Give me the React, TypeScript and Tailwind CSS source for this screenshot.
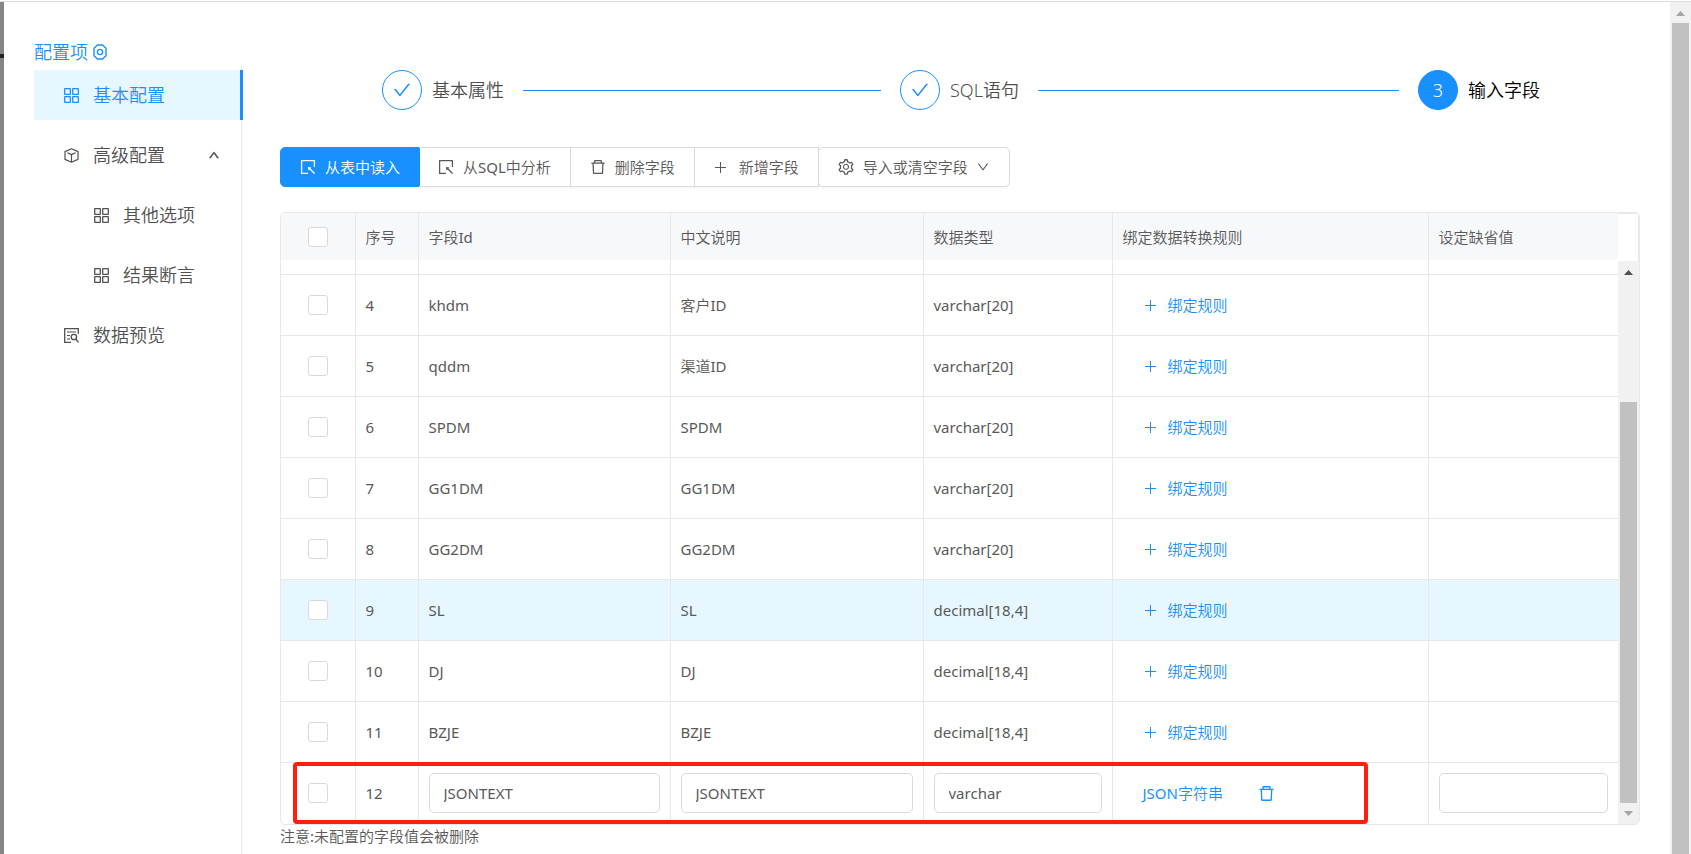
// Import Dependencies
import { ReactNode } from "react";
import clsx from "clsx";
import {
  AiOutlineCheck,
  AiOutlineDelete,
  AiOutlineDown,
  AiOutlineSelect,
  AiOutlineSetting,
  AiOutlineUp,
} from "react-icons/ai";

// ----------------------------------------------------------------------

interface Field {
  no: number;
  id: string;
  label: string;
  type: string;
}

const fields: Field[] = [
  { no: 4, id: "khdm", label: "客户ID", type: "varchar[20]" },
  { no: 5, id: "qddm", label: "渠道ID", type: "varchar[20]" },
  { no: 6, id: "SPDM", label: "SPDM", type: "varchar[20]" },
  { no: 7, id: "GG1DM", label: "GG1DM", type: "varchar[20]" },
  { no: 8, id: "GG2DM", label: "GG2DM", type: "varchar[20]" },
  { no: 9, id: "SL", label: "SL", type: "decimal[18,4]" },
  { no: 10, id: "DJ", label: "DJ", type: "decimal[18,4]" },
  { no: 11, id: "BZJE", label: "BZJE", type: "decimal[18,4]" },
];

const hoveredNo = 9;

const headers = [
  "序号",
  "字段Id",
  "中文说明",
  "数据类型",
  "绑定数据转换规则",
  "设定缺省值",
];

const cellClass = "border-r border-[#e8e8e8] px-[10px] last:border-r-0";

// ----------------------------------------------------------------------

interface IconProps {
  className?: string;
}

function HexagonIcon() {
  return (
    <svg viewBox="0 0 16 16" className="size-4" fill="none" stroke="currentColor">
      <path
        d="M5.4 1h5.2L14 4.200v7.600L10.600 15H5.400L2 11.800V4.200z"
        strokeWidth="1.4"
        strokeLinejoin="round"
      />
      <circle cx="8" cy="8" r="2.6" strokeWidth="1.4" />
    </svg>
  );
}

function GridIcon({ className }: IconProps) {
  return (
    <svg
      viewBox="0 0 15 15"
      className={className}
      fill="none"
      stroke="currentColor"
      strokeWidth="1.3"
    >
      <rect x=".7" y=".7" width="5.6" height="5.6" rx=".3" />
      <rect x="8.7" y=".7" width="5.6" height="5.6" rx=".3" />
      <rect x=".7" y="8.7" width="5.6" height="5.6" rx=".3" />
      <rect x="8.7" y="8.7" width="5.6" height="5.6" rx=".3" />
    </svg>
  );
}

function CubeIcon({ className }: IconProps) {
  return (
    <svg
      viewBox="0 0 15 15"
      className={className}
      fill="none"
      stroke="currentColor"
      strokeWidth="1.2"
      strokeLinejoin="round"
    >
      <path d="M7.5.8 14 3.6v7.8l-6.5 2.8L1 11.4V3.6z" />
      <path d="m3.4 4.7 4.1 1.9 4.1-1.9M7.5 6.6V14" />
    </svg>
  );
}

function PreviewIcon({ className }: IconProps) {
  return (
    <svg viewBox="0 0 15 15" className={className} fill="none" stroke="currentColor">
      <path d="M7 14.3H.7V.7h13.6v5" strokeWidth="1.3" />
      <path d="M3 4h9M3 7.5h3M3 11h3" strokeWidth="1.2" />
      <circle cx="9.9" cy="9" r="2.7" strokeWidth="1.3" />
      <path d="m11.8 11 2.7 3.4" strokeWidth="1.3" />
    </svg>
  );
}

function PlusIcon({ className }: IconProps) {
  return (
    <svg viewBox="0 0 18 18" className={className} fill="none" stroke="currentColor">
      <path d="M2 9.5h11M7.5 4v11" strokeWidth="1" />
    </svg>
  );
}

interface MenuItemProps {
  icon: typeof GridIcon;
  label: string;
  active?: boolean;
  nested?: boolean;
  expanded?: boolean;
}

function MenuItem({ icon: Icon, label, active, nested, expanded }: MenuItemProps) {
  return (
    <li>
      <a
        href="#"
        className={clsx(
          "flex h-[50px] items-center gap-[14px] pr-[21px] text-lg",
          nested ? "pl-[60px]" : "pl-[30px]",
          active
            ? "-mr-[2px] border-r-[3px] border-[#1890ff] bg-[#e6f7ff] text-[#1890ff]"
            : "text-[#505050]",
        )}
      >
        <Icon className="size-[15px] shrink-0" />
        <span>{label}</span>
        {expanded && <AiOutlineUp className="ml-auto size-3 stroke-[60]" />}
      </a>
    </li>
  );
}

interface StepProps {
  label: string;
  mark: ReactNode;
  current?: boolean;
}

function Step({ label, mark, current }: StepProps) {
  return (
    <li className={clsx("flex items-center font-light", !current && "flex-1")}>
      <span
        className={clsx(
          "flex size-10 shrink-0 items-center justify-center rounded-full border border-[#1890ff]",
          current ? "bg-[#1890ff] text-lg text-white" : "text-xl text-[#1890ff]",
        )}
      >
        {mark}
      </span>
      <span
        className={clsx(
          "ml-[10px] shrink-0 text-lg",
          current ? "text-black" : "text-[#505050]",
        )}
      >
        {label}
      </span>
      {!current && <span className="mx-[19px] h-px flex-1 bg-[#1890ff]" />}
    </li>
  );
}

interface ToolButtonProps {
  icon: typeof PlusIcon;
  children: ReactNode;
  className?: string;
}

function ToolButton({ icon: Icon, children, className }: ToolButtonProps) {
  return (
    <button
      type="button"
      className={clsx(
        "flex h-10 items-center gap-2 border pl-[18px] pr-[19px] shadow-[0_2px_0_rgba(0,0,0,0.02)]",
        className,
      )}
    >
      <Icon className="size-[18px]" />
      {children}
    </button>
  );
}

function Checkbox({ label }: { label: string }) {
  return (
    <input
      type="checkbox"
      aria-label={label}
      className="mx-auto block size-5 appearance-none rounded-[3px] border border-[#d9d9d9] bg-white"
    />
  );
}

function TextBox({ label, value = "" }: { label: string; value?: string }) {
  return (
    <input
      type="text"
      aria-label={label}
      defaultValue={value}
      className="block h-10 w-full rounded-[5px] border border-[#d9d9d9] bg-white px-[14px]"
    />
  );
}

function Arrow({ down, muted }: { down?: boolean; muted?: boolean }) {
  return (
    <svg
      viewBox="0 0 9 5"
      className={clsx("h-[5px] w-[9px]", muted ? "text-[#a3a3a3]" : "text-[#505050]")}
      fill="currentColor"
    >
      <path d={down ? "M0 0h9L4.5 5z" : "M0 5h9L4.5 0z"} />
    </svg>
  );
}

// ----------------------------------------------------------------------

function FieldTable() {
  return (
    <div className="mt-[25px] flex overflow-hidden rounded-[5px] border border-[#e8e8e8]">
      <div className="relative min-w-0 flex-1">
        <table className="w-full table-fixed text-left">
          <colgroup>
            <col className="w-[74px]" />
            <col className="w-[63px]" />
            <col className="w-[252px]" />
            <col className="w-[253px]" />
            <col className="w-[189px]" />
            <col className="w-[316px]" />
            <col className="w-[190px]" />
          </colgroup>
          <thead>
            <tr className="h-[47px] bg-[#f7f8fa]">
              <th className={cellClass}>
                <Checkbox label="全选" />
              </th>
              {headers.map((header) => (
                <th key={header} className={clsx(cellClass, "font-normal")}>
                  {header}
                </th>
              ))}
            </tr>
          </thead>
          <tbody>
            {/* Bottom edge of the row scrolled under the header */}
            <tr className="h-[14px] border-b border-[#e8e8e8]" aria-hidden="true">
              {[0, ...headers].map((key) => (
                <td key={key} className={cellClass} />
              ))}
            </tr>
            {fields.map((field) => (
              <tr
                key={field.no}
                className={clsx(
                  "h-[61px] border-b border-[#e8e8e8]",
                  field.no === hoveredNo && "bg-[#e6f7ff]",
                )}
              >
                <td className={cellClass}>
                  <Checkbox label={`选择 ${field.id}`} />
                </td>
                <td className={cellClass}>{field.no}</td>
                <td className={cellClass}>{field.id}</td>
                <td className={cellClass}>{field.label}</td>
                <td className={cellClass}>{field.type}</td>
                <td className={cellClass}>
                  <button
                    type="button"
                    className="ml-5 flex items-center gap-[7px] text-[#1890ff]"
                  >
                    <PlusIcon className="size-[18px]" />
                    绑定规则
                  </button>
                </td>
                <td className={cellClass} />
              </tr>
            ))}
            <tr className="h-[62px]">
              <td className={cellClass}>
                <Checkbox label="选择 JSONTEXT" />
              </td>
              <td className={cellClass}>12</td>
              <td className={cellClass}>
                <TextBox label="字段Id" value="JSONTEXT" />
              </td>
              <td className={cellClass}>
                <TextBox label="中文说明" value="JSONTEXT" />
              </td>
              <td className={cellClass}>
                <TextBox label="数据类型" value="varchar" />
              </td>
              <td className={cellClass}>
                <div className="ml-5 flex items-center gap-[34px] text-[#1890ff]">
                  <button type="button">JSON字符串</button>
                  <button type="button" aria-label="删除">
                    <AiOutlineDelete className="size-[19px]" />
                  </button>
                </div>
              </td>
              <td className={cellClass}>
                <TextBox label="设定缺省值" />
              </td>
            </tr>
          </tbody>
        </table>
        {/* Marker round the new row */}
        <div className="pointer-events-none absolute bottom-0 left-3 h-[62px] w-[80.4%] rounded-[4px] border-4 border-[#ff1f0f]" />
      </div>

      <div className="flex w-[21px] flex-col">
        <div className="h-12 border-r border-t border-[#e8e8e8] bg-white" />
        <div className="flex flex-1 flex-col items-center bg-[#f1f1f1]">
          <div className="flex h-[21px] items-center pt-[2px]">
            <Arrow />
          </div>
          <div className="mt-[120px] w-[17px] flex-1 bg-[#c1c1c1]" />
          <div className="flex h-[21px] items-center">
            <Arrow down muted />
          </div>
        </div>
      </div>
    </div>
  );
}

export default function App() {
  return (
    <div className="flex h-screen flex-col overflow-hidden bg-white pt-px font-['Noto_Sans','Noto_Sans_CJK_SC_DemiLight','Noto_Sans_CJK_SC_Light','Noto_Sans_CJK_SC',sans-serif] text-[15px] leading-[22px] text-[#595959]">
      <div className="h-px shrink-0 bg-[#dcdcdc]" />
      <div className="flex min-h-0 flex-1">
        <div className="w-1 shrink-0 bg-[#868484] pt-[52px]">
          <div className="h-1 bg-[#222]" />
        </div>

        <aside className="ml-[30px] flex w-[208px] shrink-0 flex-col pt-[37px]">
          <h1 className="flex h-[26px] items-center gap-1 text-lg leading-[26px] text-[#1890ff]">
            配置项
            <HexagonIcon />
          </h1>
          <nav className="flex-1 border-r border-[#e8e8e8] pt-[5px]">
            <ul className="space-y-[10px]">
              <MenuItem icon={GridIcon} label="基本配置" active />
              <MenuItem icon={CubeIcon} label="高级配置" expanded />
              <MenuItem icon={GridIcon} label="其他选项" nested />
              <MenuItem icon={GridIcon} label="结果断言" nested />
              <MenuItem icon={PreviewIcon} label="数据预览" />
            </ul>
          </nav>
        </aside>

        <main className="min-w-0 flex-1 pl-[38px] pr-[30px] pt-[68px]">
          <ol className="flex pl-[102px] pr-[100px]">
            <Step label="基本属性" mark={<AiOutlineCheck />} />
            <Step label="SQL语句" mark={<AiOutlineCheck />} />
            <Step label="输入字段" mark="3" current />
          </ol>

          <div className="mt-[37px] flex">
            <ToolButton
              icon={AiOutlineSelect}
              className="rounded-l-[5px] border-[#1890ff] bg-[#1890ff] text-white"
            >
              从表中读入
            </ToolButton>
            <ToolButton icon={AiOutlineSelect} className="-ml-px border-l-0 border-[#d9d9d9]">
              从SQL中分析
            </ToolButton>
            <ToolButton icon={AiOutlineDelete} className="-ml-px border-[#d9d9d9]">
              删除字段
            </ToolButton>
            <ToolButton icon={PlusIcon} className="-ml-px border-[#d9d9d9]">
              新增字段
            </ToolButton>
            <ToolButton
              icon={AiOutlineSetting}
              className="-ml-px rounded-[5px] border-[#d9d9d9]"
            >
              导入或清空字段
              <AiOutlineDown className="size-[14px]" />
            </ToolButton>
          </div>

          <FieldTable />
          <p>注意:未配置的字段值会被删除</p>
        </main>

        <div className="flex w-[21px] shrink-0 flex-col items-center bg-[#f1f1f1]">
          <div className="flex h-[21px] items-center pt-[2px]">
            <Arrow muted />
          </div>
          <div className="w-[17px] flex-1 bg-[#c1c1c1]" />
        </div>
      </div>
    </div>
  );
}
